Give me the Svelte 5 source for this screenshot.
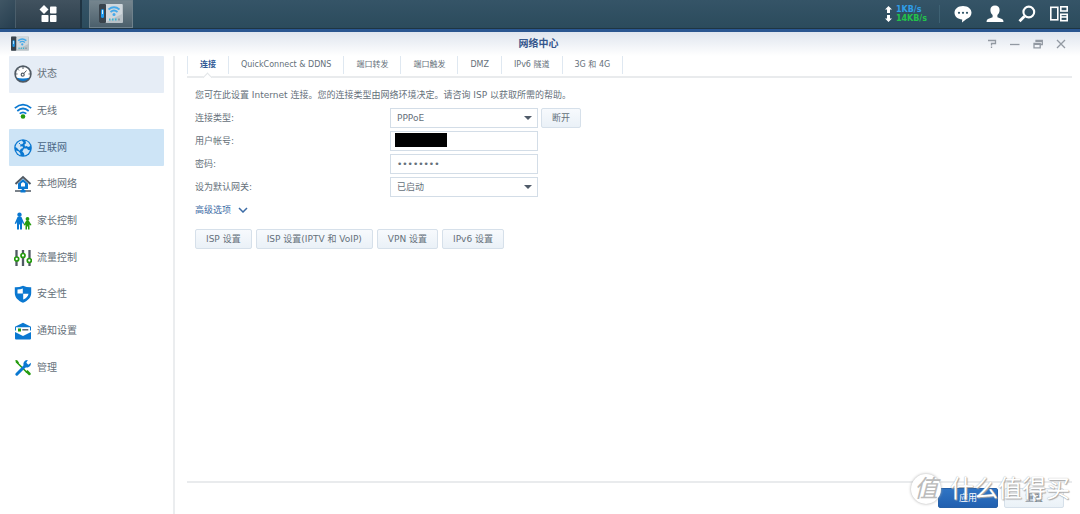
<script>
    const NAV = [
        { id: 'status',   label: '状态' },
        { id: 'wireless', label: '无线' },
        { id: 'internet', label: '互联网' },
        { id: 'local',    label: '本地网络' },
        { id: 'parental', label: '家长控制' },
        { id: 'traffic',  label: '流量控制' },
        { id: 'security', label: '安全性' },
        { id: 'notify',   label: '通知设置' },
        { id: 'admin',    label: '管理' },
    ];

    const TABS = ['连接', 'QuickConnect & DDNS', '端口转发', '端口触发', 'DMZ', 'IPv6 隧道', '3G 和 4G'];
    const SETTINGS = ['ISP 设置', 'ISP 设置(IPTV 和 VoIP)', 'VPN 设置', 'IPv6 设置'];

    let page = 'internet';
    let hovered = 'status';
    let tab = TABS[0];
    let type = 'PPPoE';
    let account = '';
    let password = 'password';
    let gateway = '已启动';
</script>

{#snippet router(size)}
    <svg width={size} height={size} viewBox="0 0 24 24" aria-hidden="true">
        <rect x="0" y="2" width="24" height="19" rx="1" fill="#b9c2c8" />
        <path d="M7 2h16v10L7 20z" fill="#d0d7dc" />
        <rect x="0" y="2" width="7" height="19" rx="1" fill="#39434c" />
        <rect x="2" y="7" width="3" height="9" rx="1.500" fill="#1e9bf0" />
        <rect x="3" y="8" width="1" height="4" fill="#d5f2ff" />
        <path d="M9.500 7.500q5.500-4.500 11 0M11.500 10q3.500-3 7 0" fill="none" stroke="#45a9ea" stroke-width="1.800" />
        <circle cx="15" cy="12.500" r="1.500" fill="#45a9ea" />
        <path d="M10 17.500h8" stroke="#36b3d4" stroke-width="2" stroke-dasharray="1.500 1.500" />
        <path d="M19 17.500h2" stroke="#8d999f" stroke-width="2" />
    </svg>
{/snippet}

<div class="desktop">
    <header class="taskbar">
        <span class="edge"></span>
        <button class="task menu" aria-label="主菜单">
            <svg width="18" height="18" viewBox="0 0 18 18" fill="#fff">
                <path d="M5 0l4.500 4.500L5 9 .5 4.500z" />
                <rect x="11" y="1.500" width="6.500" height="7" rx=".8" />
                <rect x="2.500" y="10" width="7" height="7" rx=".8" />
                <rect x="11" y="10" width="6.500" height="7" rx=".8" />
            </svg>
        </button>
        <button class="task app" aria-label="网络中心">{@render router(24)}</button>
        <div class="tray">
            <div class="speed">
                <span class="up"><svg width="7" height="7" viewBox="0 0 7 7" fill="#fff"><path d="M3.500 0L7 3.500H5V7H2V3.500H0z" /></svg>1KB/s</span>
                <span class="down"><svg width="7" height="7" viewBox="0 0 7 7" fill="#fff"><path d="M3.500 7L7 3.500H5V0H2v3.500H0z" /></svg>14KB/s</span>
            </div>
            <button aria-label="通知">
                <svg width="18" height="18" viewBox="0 0 18 18">
                    <path d="M9 1c5 0 8.500 2.900 8.500 6.800 0 3-2.200 5.300-5 6.200L8 17.500l.2-3C3.800 14.300.5 11.500.5 7.800.5 3.900 4 1 9 1z" fill="#fff" />
                    <g fill="#2d5265"><circle cx="5" cy="7.800" r="1.100" /><circle cx="9" cy="7.800" r="1.100" /><circle cx="13" cy="7.800" r="1.100" /></g>
                </svg>
            </button>
            <button aria-label="用户">
                <svg width="18" height="18" viewBox="0 0 18 18" fill="#fff">
                    <path d="M9 .5c2.900 0 4.600 1.700 4.600 4.500 0 2.200-.9 4-2.200 5v2.200l4.600 1.800q1.500.7 1.500 3H.5q0-2.300 1.500-3l4.600-1.800V10c-1.300-1-2.200-2.800-2.200-5C4.400 2.200 6.100.5 9 .5z" />
                </svg>
            </button>
            <button aria-label="搜索">
                <svg width="18" height="18" viewBox="0 0 18 18" fill="none" stroke="#fff">
                    <circle cx="10.800" cy="7" r="5.400" stroke-width="2.100" />
                    <path d="M6.500 11.300L1.500 16.300" stroke-width="2.900" />
                </svg>
            </button>
            <button aria-label="小工具">
                <svg width="18" height="18" viewBox="0 0 18 18" fill="none" stroke="#fff" stroke-width="1.600">
                    <rect x=".8" y="2.300" width="7" height="12.500" />
                    <rect x="10.800" y="1.800" width="6.400" height="4.200" />
                    <rect x="10.800" y="9.300" width="6.400" height="6.400" />
                    <path d="M11 12h6" />
                </svg>
            </button>
        </div>
    </header>

    <div class="window">
        <div class="titlebar">
            <span class="appicon">{@render router(18)}</span>
            <h1>网络中心</h1>
            <div class="controls">
                <button aria-label="帮助"><svg width="10" height="10" viewBox="0 0 10 10"><path d="M1 1.500h7.500v3H4.500V6.500M4.500 7.500v1.500" /></svg></button>
                <button aria-label="最小化"><svg width="10" height="10" viewBox="0 0 10 10"><path d="M0 5.500h9.500" /></svg></button>
                <button aria-label="还原"><svg width="10" height="10" viewBox="0 0 10 10"><path d="M3 3V1.500h6.300v4H7.500M1 4.500h6.200v4.300H1zM1 5.300h6M3 2.300h6" /></svg></button>
                <button aria-label="关闭"><svg width="10" height="10" viewBox="0 0 10 10"><path d="M1 1l8 8M9 1L1 9" /></svg></button>
            </div>
        </div>

        <div class="body">
            <nav>
                {#each NAV as n}
                    <button class:active={page === n.id} class:hover={hovered === n.id} on:click={() => (page = n.id)}>
                        <svg width="18" height="18" viewBox="0 0 18 18" aria-hidden="true">
                            {#if n.id === 'status'}
                                <circle cx="9" cy="9" r="7.800" fill="#fff" />
                                <path d="M1.800 12.500Q9 14.500 16.200 12.500A8 8 0 0 1 1.800 12.500z" fill="#0a78d1" />
                                <circle cx="9" cy="9" r="7.900" fill="none" stroke="#505a64" stroke-width="1.600" />
                                <path d="M9 2v2M3.800 4.200l1.200 1.200M2 9h1.500M14.500 9H16M12.500 5.500L9.800 8.500" stroke="#505a64" />
                                <circle cx="8.700" cy="9.700" r="1.500" fill="none" stroke="#505a64" stroke-width="1.200" />
                            {:else if n.id === 'wireless'}
                                <g fill="none" stroke="#0a78d1" stroke-width="1.700">
                                    <path d="M.8 6.200q8.200-7 16.400 0M3.300 9q5.700-5 11.400 0M5.700 11.700q3.300-2.800 6.600 0" />
                                </g>
                                <circle cx="9" cy="14.500" r="2.300" fill="#259b0f" />
                            {:else if n.id === 'internet'}
                                <circle cx="9" cy="9" r="8.800" fill="#0a78d1" />
                                <path d="M7.500 1.500l2 1.700-1 1.800-1.800.5L6 7.500l2.500-.3L9 9l-2 .7-1.500 2L3 9 1.500 8C2 5 4 2.500 7.500 1.500zM11.500 1.800C14 2.700 15.800 4.700 16.300 7l-2 1-1.800-1-1.500.5-.5-2 1.500-1.200zM2 11.500l2.500.8 1.800 2 .2 2C4.300 15.500 2.700 13.800 2 11.500zM10 9.500h3l1 1.500 2 .2c-.8 2.700-2.800 4.600-5.500 5.200l-.7-2.400-1.500-1.500z" fill="#cde4f6" />
                                <path d="M5 4l1.500 1.500" stroke="#0a78d1" />
                            {:else if n.id === 'local'}
                                <path d="M1.500 9L9 2l7.500 7" fill="none" stroke="#505a64" stroke-width="2" />
                                <path d="M4 8.500L9 4l5 4.500V14H4z" fill="#0a78d1" />
                                <path d="M9 7l2 1.500v3H7v-3z" fill="#fff" />
                                <path d="M1 16h6M11 16h6" stroke="#505a64" stroke-width="1.700" />
                                <path d="M9 13v3M6.500 16.200h5" stroke="#0a78d1" stroke-width="2.500" />
                            {:else if n.id === 'parental'}
                                <g fill="#0a78d1"><circle cx="5.500" cy="2.700" r="2.200" /><path d="M3.500 5h4l2.800 6.500-1.300.6L8 10v7.500H6V12.500H5v5H3V10l-1 2.100-1.300-.6z" /></g>
                                <g fill="#259b0f"><circle cx="13.500" cy="7" r="1.900" /><path d="M12 9h3l2.500 4-1 .6-1-1.200v5.100H14V14.500h-1v3h-1.500v-5.100l-1 1.200-1-.6z" /></g>
                            {:else if n.id === 'traffic'}
                                <path d="M2.500 1v16M9 1v16M15.500 1v16" stroke="#505a64" stroke-width="2.300" />
                                <g fill="#fff" stroke="#259b0f" stroke-width="1.700"><circle cx="2.700" cy="10" r="2" /><circle cx="9" cy="6.500" r="2" /><circle cx="15.300" cy="11.500" r="2" /></g>
                            {:else if n.id === 'security'}
                                <path d="M9 .8q4 1.700 8.200 1.500V8c0 4.500-3 7.500-8.200 9.800C3.800 15.500.8 12.500.8 8V2.300Q5 2.500 9 .8z" fill="#0a78d1" />
                                <path d="M8.800 3.500v5H3.500v-4Q6.500 4.500 8.800 3.500zM9.200 8.700h5.300q-.5 3.800-5.300 5.800z" fill="#fff" />
                            {:else if n.id === 'notify'}
                                <path d="M9 .8l8 4V8.500H1V4.800z" fill="#0a78d1" />
                                <path d="M2 5.200h14v4.800L9 13 2 10z" fill="#fff" />
                                <path d="M1 10l8 4 8-4v6.500q0 1-1 1H2q-1 0-1-1z" fill="#0a78d1" />
                                <rect x="4" y="6.500" width="3" height="3" fill="#259b0f" />
                                <path d="M8.300 7.800h6" stroke="#505a64" stroke-width="1.400" />
                            {:else}
                                <path d="M2 2.500L13 13.500" stroke="#259b0f" stroke-width="1.600" />
                                <path d="M1 1.500l2-.5 2 2.500-1.500 1.500zM11.500 13l2-2 3.200 3.300q.5 2.200-1.800 1.900z" fill="#259b0f" />
                                <path d="M2.800 15.200L11.500 6.500" stroke="#0a78d1" stroke-width="3" stroke-linecap="round" />
                                <path d="M13.800 1A4 4 0 0 0 10 7.200a4 4 0 0 0 6.800-3.500l-2.500 2-2-2z" fill="#0a78d1" />
                            {/if}
                        </svg>
                        {n.label}
                    </button>
                {/each}
            </nav>

            <main>
                <div class="tabs" role="tablist">
                    {#each TABS as t}
                        <button role="tab" aria-selected={tab === t} class:current={tab === t} on:click={() => (tab = t)}>{t}</button>
                    {/each}
                </div>

                <form id="connection" on:submit|preventDefault>
                    <p>您可在此设置 Internet 连接。您的连接类型由网络环境决定。请咨询 ISP 以获取所需的帮助。</p>
                    <div class="row">
                        <label for="type">连接类型:</label>
                        <div class="select">
                            <select id="type" bind:value={type}>
                                <option>PPPoE</option>
                            </select>
                        </div>
                        <button class="btn" type="button">断开</button>
                    </div>
                    <div class="row">
                        <label for="account">用户帐号:</label>
                        <div class="field">
                            <input id="account" type="text" bind:value={account} />
                            <span class="mask"></span>
                        </div>
                    </div>
                    <div class="row">
                        <label for="password">密码:</label>
                        <div class="field"><input id="password" type="password" bind:value={password} /></div>
                    </div>
                    <div class="row">
                        <label for="gateway">设为默认网关:</label>
                        <div class="select">
                            <select id="gateway" bind:value={gateway}>
                                <option>已启动</option>
                            </select>
                        </div>
                    </div>
                    <button class="more" type="button">
                        高级选项
                        <svg width="10" height="6" viewBox="0 0 10 6"><path d="M1 1l4 4 4-4" fill="none" stroke="#3c6ca6" stroke-width="1.500" /></svg>
                    </button>
                    <div class="settings">
                        {#each SETTINGS as s}
                            <button class="btn" type="button">{s}</button>
                        {/each}
                    </div>
                </form>

                <footer>
                    <button class="btn primary" type="submit" form="connection">应用</button>
                    <button class="btn" type="reset" form="connection">重置</button>
                </footer>
            </main>
        </div>
    </div>

    <div class="watermark"><span class="seal">值</span><span>什么值得买</span></div>
</div>

<style>
    :global(body) {
        background: #fff;
    }
    .desktop {
        position: relative;
        display: flex;
        flex-direction: column;
        min-height: 100vh;
        overflow: hidden;
        font-family: "DejaVu Sans", "Noto Sans CJK SC", sans-serif;
        font-size: 9px;
        line-height: 14px;
        color: #65707a;
    }
    button, input, select {
        font: inherit;
        color: inherit;
        margin: 0;
        padding: 0;
        border: none;
        border-radius: 0;
        background: none;
        box-sizing: border-box;
    }
    button {
        cursor: pointer;
    }
    svg {
        display: block;
        flex: none;
    }
    .taskbar {
        display: flex;
        height: 28px;
        background: linear-gradient(#355467, #2b4b5c);
        border-bottom: 1px solid #1e3543;
    }
    .edge {
        width: 15px;
        background: linear-gradient(135deg, #405665, #263e4f);
        border-right: 1px solid #4b5e6b;
    }
    .task {
        display: flex;
        align-items: center;
        justify-content: center;
    }
    .menu {
        width: 66px;
        background: linear-gradient(#41525f, #2d3f4c);
        border-right: 2px solid #1f3442;
    }
    .app {
        width: 44px;
        margin-left: 7px;
        background: linear-gradient(#75858e, #4c606c);
        border: 1px solid #6f818b;
    }
    .tray {
        display: flex;
        align-items: center;
        margin-left: auto;
        padding-right: 12px;
        gap: 14px;
    }
    .tray button {
        width: 18px;
        height: 18px;
    }
    .speed {
        display: flex;
        flex-direction: column;
        padding-right: 12px;
        border-right: 1px solid #3e6173;
        font-size: 8px;
        font-weight: bold;
        line-height: 9px;
    }
    .speed span {
        display: flex;
        align-items: center;
        gap: 4px;
    }
    .up {
        color: #2f9de6;
    }
    .down {
        color: #22c24a;
    }
    .window {
        flex: 1;
        display: flex;
        flex-direction: column;
        border-top: 3px solid #2a5690;
        background: #fff;
    }
    .titlebar {
        display: grid;
        grid-template-columns: 1fr auto 1fr;
        align-items: center;
        height: 24px;
        padding: 0 14px 0 11px;
        background: linear-gradient(#dfe5ee, #fff);
    }
    h1 {
        margin: 0;
        font-size: 10px;
        line-height: 14px;
        color: #35568c;
    }
    .controls {
        display: flex;
        justify-content: flex-end;
        gap: 13px;
    }
    .controls svg {
        fill: none;
        stroke: #9299a2;
        stroke-width: 1.3;
    }
    .body {
        flex: 1;
        display: flex;
    }
    nav {
        display: grid;
        grid-auto-rows: 1fr;
        align-self: flex-start;
        box-sizing: border-box;
        width: 164px;
        min-height: 330px;
        padding-left: 9px;
    }
    nav button {
        display: flex;
        align-items: center;
        gap: 5px;
        padding: 0 5px;
        border-radius: 1px;
        font-size: 10px;
    }
    nav .hover {
        background: #e6edf6;
    }
    nav .active {
        background: #cde4f6;
        color: #4a6685;
    }
    main {
        flex: 1;
        display: flex;
        flex-direction: column;
        margin-left: 9px;
        padding: 0 8px 0 12px;
        border-left: 2px solid #ebedef;
    }
    .tabs {
        display: flex;
        align-items: flex-start;
        height: 20px;
        border-bottom: 2px solid #e9ebed;
    }
    .tabs button {
        position: relative;
        height: 18px;
        padding: 0 12px;
        border-right: 1px solid #dfe8f1;
        font-size: 8px;
    }
    .tabs button:first-child {
        border-left: 1px solid #dfe8f1;
    }
    .tabs .current {
        color: #2d5794;
        font-weight: bold;
    }
    .tabs .current::after {
        content: '';
        position: absolute;
        left: 50%;
        bottom: -7px;
        width: 6px;
        height: 6px;
        margin-left: -4px;
        background: #fff;
        border: solid #e3e6e9;
        border-width: 1px 0 0 1px;
        transform: rotate(45deg);
    }
    form {
        display: flex;
        flex-direction: column;
        gap: 3px;
        padding: 10px 8px;
    }
    p {
        margin: 0 0 3px;
    }
    .row {
        display: flex;
        align-items: center;
        height: 20px;
    }
    .row label {
        width: 195px;
    }
    .select, .field {
        position: relative;
        width: 148px;
        height: 20px;
        margin-right: 3px;
    }
    .select select, .field input {
        width: 100%;
        height: 100%;
        padding: 0 6px;
        border: 1px solid #d3dde7;
        background: #fff;
        appearance: none;
        outline: none;
    }
    .select::after {
        content: '';
        position: absolute;
        right: 6px;
        top: 8px;
        border: solid transparent;
        border-width: 4px 4px 0;
        border-top-color: #505b69;
        pointer-events: none;
    }
    .mask {
        position: absolute;
        left: 5px;
        top: 2px;
        width: 52px;
        height: 14px;
        background: #000;
    }
    .btn {
        height: 20px;
        padding: 0 10px;
        border: 1px solid #d6e0ea;
        border-radius: 2px;
        background: linear-gradient(#f7fafd, #eaf1f7);
    }
    .more {
        display: flex;
        align-items: center;
        align-self: flex-start;
        gap: 7px;
        height: 20px;
        color: #3c6ca6;
    }
    .settings {
        display: flex;
        gap: 4px;
        margin-top: 6px;
    }
    footer {
        display: flex;
        justify-content: flex-end;
        gap: 6px;
        margin-top: auto;
        padding: 5px 8px 6px;
        border-top: 2px solid #e9ebed;
    }
    footer .btn {
        width: 60px;
    }
    footer .primary {
        border-color: #2560a8;
        background: linear-gradient(#2f74c4, #2160b0);
        color: #fff;
    }
    .watermark {
        position: absolute;
        right: 10px;
        bottom: 10px;
        display: flex;
        align-items: center;
        gap: 9px;
        font-size: 24px;
        line-height: 30px;
        color: #fff;
        text-shadow: 0 0 1px #999, 1px 1px 1px #aaa;
        pointer-events: none;
    }
    .seal {
        width: 30px;
        height: 30px;
        border-radius: 50%;
        background: #fff;
        box-shadow: 0 0 3px #aaa;
        color: #bbb;
        font-style: italic;
        text-align: center;
        text-shadow: none;
    }
</style>
